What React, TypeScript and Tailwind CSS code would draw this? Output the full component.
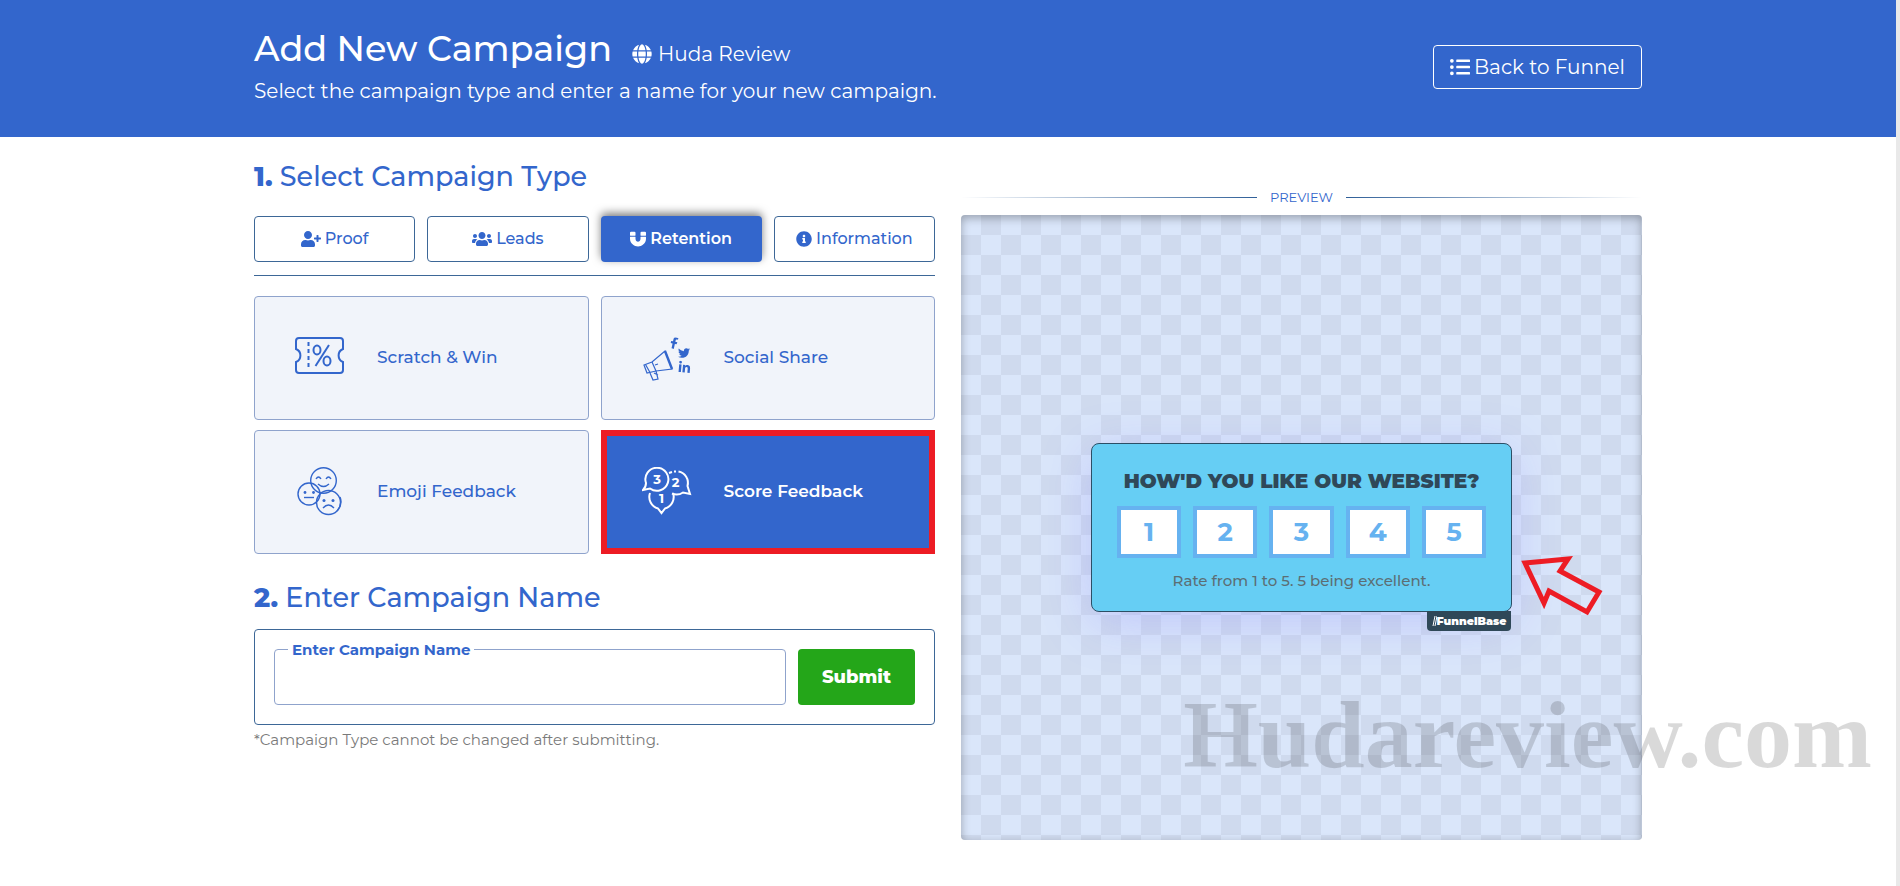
import React from "react";
import { FaUserPlus, FaUsers, FaMagnet, FaInfoCircle, FaGlobe, FaListUl, FaTwitter, FaFacebookF, FaLinkedinIn } from "react-icons/fa";

const tabs = [
  { label: "Proof", Icon: FaUserPlus, iconClass: "h-4 w-5", active: false },
  { label: "Leads", Icon: FaUsers, iconClass: "h-4 w-5", active: false },
  { label: "Retention", Icon: FaMagnet, iconClass: "size-4", active: true },
  { label: "Information", Icon: FaInfoCircle, iconClass: "size-4", active: false },
];

function TicketIcon() {
  return (
    <svg viewBox="0 0 50 50" className="size-[50px]" fill="none" stroke="currentColor" strokeWidth="2" aria-hidden="true">
      <path d="M4 5H45Q48 5 48 8V16A7 7 0 0 0 48 29V37Q48 40 45 40H4Q1 40 1 37V29A7 7 0 0 0 1 16V8Q1 5 4 5Z" />
      <path d="M13.500 9V36" strokeDasharray="4 3" />
      <path d="M34 12L20.500 33" />
      <ellipse cx="22" cy="17" rx="3.5" ry="4.5" />
      <ellipse cx="32" cy="28" rx="3.5" ry="4.5" />
    </svg>
  );
}

function MegaphoneIcon() {
  return (
    <svg viewBox="0 0 50 50" className="size-[50px]" fill="none" stroke="currentColor" strokeWidth="1.2" aria-hidden="true">
      <path d="M2 32L10 29L23 18L30 36L14 38L5 40Z" />
      <path d="M3.500 31.500L8 39.500M10 29L14 38M13 32L16 31" />
      <path d="M8 40L11 47L16 46L14 38M12 40L16 42" />
      <path d="M23 18L30 36" strokeWidth="2.4" />
      <g stroke="none" fill="currentColor">
        <g transform="translate(26 4) rotate(12 6 6)"><FaFacebookF size={12} /></g>
        <g transform="translate(36 14)"><FaTwitter size={12} /></g>
        <g transform="translate(36 28) rotate(5 6 6)"><FaLinkedinIn size={13} /></g>
      </g>
    </svg>
  );
}

function EmojiIcon() {
  return (
    <svg viewBox="0 0 50 50" className="size-[50px]" fill="none" stroke="currentColor" strokeWidth="1.4" aria-hidden="true">
      <circle cx="28.5" cy="13.5" r="12.800" />
      <path d="M21 12Q23.500 8 26 12M31 12Q33.500 8 36 12M23 17Q28.500 22 34 17" />
      <circle cx="14" cy="27" r="11" />
      <path d="M9 30.500H19" />
      <circle cx="33.5" cy="35.5" r="12" />
      <path d="M45 30Q48 37 42 44" />
      <path d="M28 41Q33.500 35 39 41" />
      <g fill="currentColor" stroke="none">
        <circle cx="10" cy="25.500" r="1.400" />
        <circle cx="18.500" cy="25.500" r="1.400" />
        <circle cx="29" cy="33.500" r="1.500" />
        <circle cx="38" cy="33.500" r="1.500" />
      </g>
    </svg>
  );
}

function ScoreIcon() {
  return (
    <svg viewBox="0 0 50 50" className="size-[50px]" fill="none" stroke="currentColor" strokeWidth="2" aria-hidden="true">
      <path d="M4 16A11.500 11.500 0 1 1 8 21.500L1 23Q4 20 4 16Z" />
      <path d="M27 6L30 5M32 4.500H34M36.500 4.600A11.500 11.500 0 0 1 45.500 19L48 27L41 25.500A11.500 11.500 0 0 1 30 26.500" />
      <path d="M8 26A12 12 0 0 0 16 41.500L19.500 46L23 41.500A12 12 0 0 0 31 26" />
      <g fill="currentColor" stroke="none" fontSize="13" fontWeight="700" textAnchor="middle">
        <text x="15" y="17">3</text>
        <text x="33.500" y="20">2</text>
        <text x="19.500" y="36">1</text>
      </g>
    </svg>
  );
}

const types = [
  { label: "Scratch & Win", Icon: TicketIcon, active: false },
  { label: "Social Share", Icon: MegaphoneIcon, active: false },
  { label: "Emoji Feedback", Icon: EmojiIcon, active: false },
  { label: "Score Feedback", Icon: ScoreIcon, active: true },
];

export default function App() {
  return (
    <div className="relative min-h-screen border-r-4 border-[#e9e9e9] bg-white font-['Montserrat','Inter',sans-serif] text-[#3366cc]">
      <header className="bg-[#3366cc] text-white">
        <div className="mx-auto flex h-[137px] w-full max-w-[1388px] items-start justify-between">
          <div className="pt-7">
            <div className="flex items-baseline gap-5">
              <h1 className="text-[35px] leading-[42px] font-medium">Add New Campaign</h1>
              <span className="flex items-baseline gap-[6px] text-[20px]">
                <FaGlobe className="size-5 self-center" /> Huda Review
              </span>
            </div>
            <p className="mt-[6px] text-[20px] leading-[30px]">Select the campaign type and enter a name for your new campaign.</p>
          </div>
          <a href="#funnel" className="mt-[45px] flex h-11 items-center gap-1 rounded border border-white px-4 text-[20px]">
            <FaListUl className="size-5" /> Back to Funnel
          </a>
        </div>
      </header>

      <main className="mx-auto grid w-full max-w-[1388px] grid-cols-2 gap-[26px]">
        <section>
          <h2 className="mt-5 text-[27px] leading-10 font-medium"><b className="font-extrabold">1.</b> Select Campaign Type</h2>
          <div className="mt-[19px] grid grid-cols-4 gap-3 border-b border-[#3d6797] pb-[13px]">
            {tabs.map(({ label, Icon, iconClass, active }) => (
              <button
                key={label}
                type="button"
                className={
                  active
                    ? "flex h-[46px] items-center justify-center gap-1 rounded bg-[#3366cc] text-[16px] font-semibold text-white shadow-[0_-3px_8px_rgba(0,0,0,0.5)]"
                    : "flex h-[46px] items-center justify-center gap-1 rounded border border-[#3d6797] text-[16px] font-medium"
                }
              >
                <Icon className={iconClass} /> {label}
              </button>
            ))}
          </div>

          <div className="mt-5 grid grid-cols-2 gap-x-3 gap-y-[10px]">
            {types.map(({ label, Icon, active }) => (
              <button
                key={label}
                type="button"
                className={
                  active
                    ? "flex h-[124px] items-center gap-8 border-6 border-[#ed1c24] bg-[#3366cc] pl-[35px] text-[17px] font-semibold text-white"
                    : "flex h-[124px] items-center gap-8 rounded border border-[#8fa3cc] bg-[#f1f4fa] pl-10 text-[17px] font-medium"
                }
              >
                <Icon /> {label}
              </button>
            ))}
          </div>

          <h2 className="mt-6 text-[27px] leading-10 font-medium"><b className="font-extrabold">2.</b> Enter Campaign Name</h2>
          <form className="mt-[11px] flex gap-3 rounded border border-[#3d6797] p-[19px]" onSubmit={(e) => e.preventDefault()}>
            <div className="relative flex-1">
              <input id="campaign-name" type="text" className="h-14 w-full rounded border border-[#8fa3cc] px-4 text-[17px] outline-none" />
              <label htmlFor="campaign-name" className="absolute -top-2 left-[14px] bg-white px-1 text-[15px] leading-[18px] font-bold">Enter Campaign Name</label>
            </div>
            <button type="submit" className="h-14 w-[117px] rounded bg-[#24a619] text-[18px] font-extrabold text-white">Submit</button>
          </form>
          <p className="mt-1 text-[15px] leading-[22px] text-[#7a7a7a]">*Campaign Type cannot be changed after submitting.</p>
        </section>

        <section>
          <div className="mt-[50px] flex items-center gap-[13px] text-[13px] leading-5">
            <span className="h-px flex-1 bg-linear-to-l from-[#2f5f98] to-transparent" />
            PREVIEW
            <span className="h-px flex-1 bg-linear-to-r from-[#2f5f98] to-transparent" />
          </div>
          <div className="mt-2 flex h-[625px] items-center justify-center rounded bg-[repeating-conic-gradient(#cfdaee_0_25%,#dae6fa_0_50%)] bg-size-[40px_40px] shadow-[inset_0_3px_10px_rgba(0,0,0,0.3)]">
            <div className="relative w-[421px] rounded-lg border border-[#2c4f66] bg-[#66cef4] px-[25px] pt-6 pb-[19px] text-center shadow-[0_10px_50px_rgba(130,130,255,0.3)]">
              <h3 className="text-[20px] leading-[26px] font-black whitespace-nowrap text-[#2f4858]">HOW'D YOU LIKE OUR WEBSITE?</h3>
              <div className="mt-3 grid grid-cols-5 gap-3">
                {[1, 2, 3, 4, 5].map((n) => (
                  <button key={n} type="button" className="h-[52px] border-4 border-[#66b2f0] bg-white text-[26px] leading-8 font-bold text-[#66b2f0]">{n}</button>
                ))}
              </div>
              <p className="mt-3 text-[15px] leading-[22px] font-medium text-[#5c6e74]">Rate from 1 to 5. 5 being excellent.</p>
              <span className="absolute top-full right-0 flex w-[84px] items-center justify-center rounded-b bg-[#2f4858] text-[11px] leading-5 font-black text-white">
                <svg viewBox="0 0 5 10" className="h-[10px] w-[5px]" fill="none" stroke="currentColor" aria-hidden="true">
                  <path d="M1 10L3 0M3 10L5 0" />
                </svg>
                FunnelBase
              </span>
            </div>
          </div>
        </section>
      </main>

      <svg viewBox="0 0 84 64" className="absolute top-[554px] left-[1519px] h-16 w-[84px]" fill="none" stroke="#ed1c24" strokeWidth="5" aria-hidden="true">
        <path d="M6 9L49 5L41 17L80 38L68 58L30 37L25 49Z" />
      </svg>
      <div className="pointer-events-none absolute top-[682px] right-6 font-['Liberation_Serif',serif] text-[96px] leading-[106px] font-bold text-black/15">Hudareview.com</div>
    </div>
  );
}
